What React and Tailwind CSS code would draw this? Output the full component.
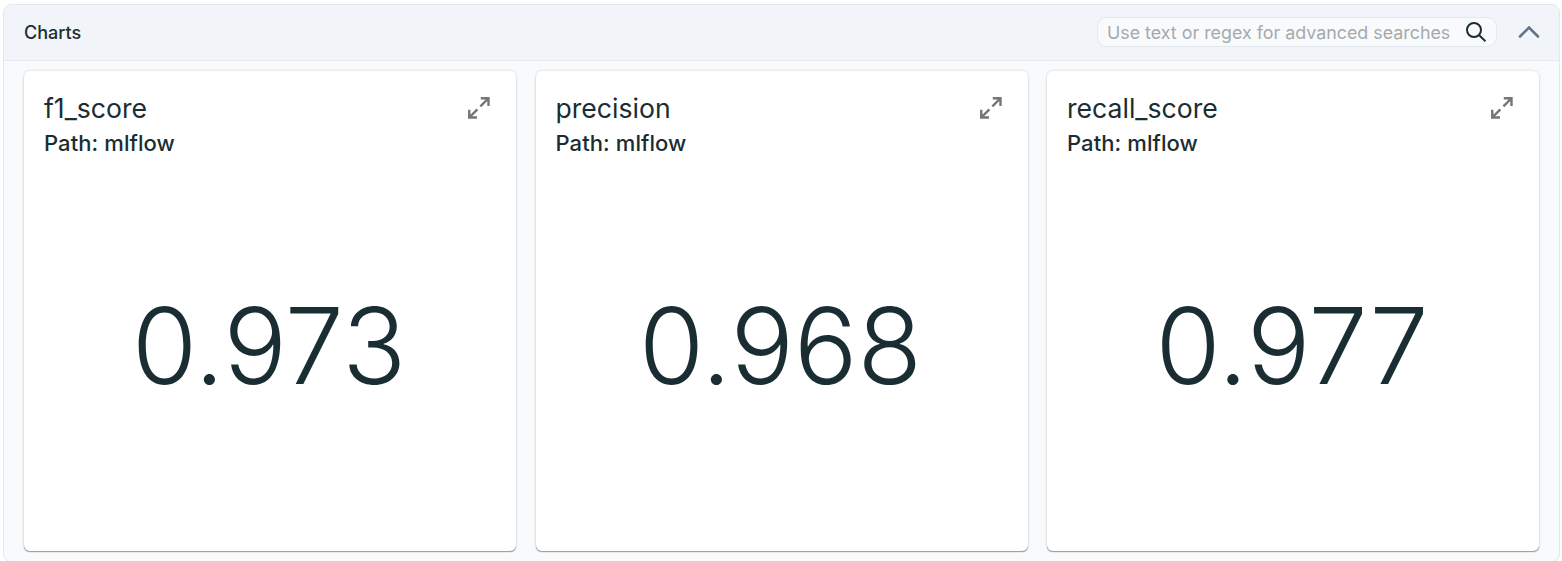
const cards = [
  { name: "f1_score", value: "0.973" },
  { name: "precision", value: "0.968" },
  { name: "recall_score", value: "0.977" },
];

function ExpandIcon() {
  return (
    <svg className="mt-[6px] mr-[6px] size-[22px] shrink-0" viewBox="0 0 22 22" fill="none" stroke="#757575" strokeWidth="2.400">
      <path d="M12.800 1.250H20.500V9M20.500 1.250L12.400 9.350M9 20.500H1.250V12.800M1.250 20.500L9.350 12.400" />
    </svg>
  );
}

function Card({ name, value }) {
  return (
    <div className="flex h-[480px] flex-1 flex-col rounded-[6px] bg-white px-5 pt-5 shadow-[0_1.500px_1px_-0.500px_rgba(0,0,0,0.35),0_0_3px_rgba(0,0,0,0.16)]">
      <div className="flex justify-between">
        <div>
          <div className="text-[26.600px] leading-[35px] text-[#192d32]">{name}</div>
          <div className="text-[22px] leading-[35px] font-medium tracking-[0.080px] text-[#192d32]">Path: mlflow</div>
        </div>
        <ExpandIcon />
      </div>
      <div className="mt-[120px] pr-[2px] text-center text-[105.500px] leading-[130px] font-light text-[#192d32]">{value}</div>
    </div>
  );
}

export default function App() {
  return (
    <div className="h-[561px] overflow-hidden bg-white pt-1 pr-[2px] pl-[3px] font-['Inter',sans-serif]">
      <div className="h-[558px] rounded-[8px] border border-[#e2e8f0] bg-[#f9fafc]">
        <div className="flex h-14 items-center rounded-t-[7px] border-b border-[#e2e8f0] bg-[#f1f4f9] pr-[19px] pl-5">
          <div className="flex-1 text-[18px] font-medium text-[#192d32]">Charts</div>
          <div className="mb-px flex h-[30px] w-[400px] items-center justify-between rounded-[10px] border border-[#e2e8f0] bg-[#f9fafc] pr-[10px] pl-[9px]">
            <span className="mt-[3px] text-[17.850px] whitespace-nowrap text-[#a3abad]">Use text or regex for advanced searches</span>
            <svg className="size-[20px]" viewBox="0 0 20 20" fill="none" stroke="#192d32" strokeWidth="2"><circle cx="8" cy="8" r="7" /><path d="M13 13L19.500 19.300" /></svg>
          </div>
          <svg className="mb-[2px] ml-[21px] h-[13px] w-[22px]" viewBox="0 0 22 13" fill="none" stroke="#64748b" strokeWidth="2.600" strokeLinecap="round"><path d="M2 11.500L11 2.500L20 11.500" /></svg>
        </div>
        <div className="flex gap-[19.500px] px-5 pt-[10px]">
          {cards.map((c) => <Card key={c.name} {...c} />)}
        </div>
      </div>
    </div>
  );
}
